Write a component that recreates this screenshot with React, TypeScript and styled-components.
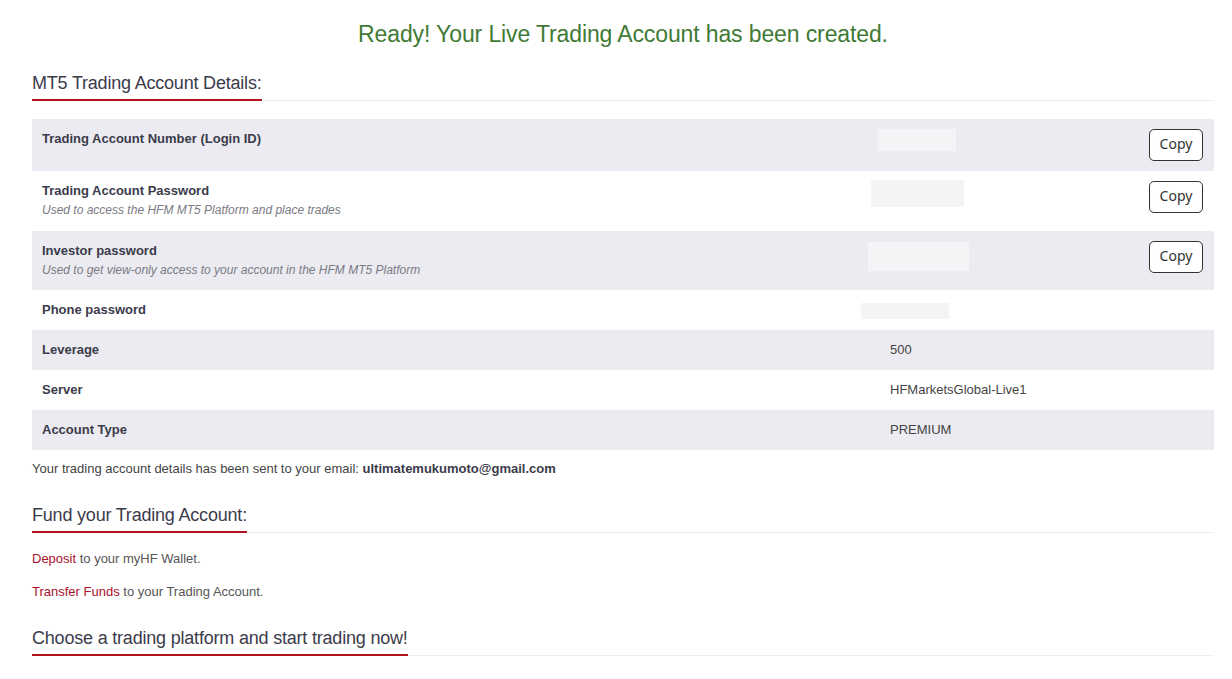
import React from 'react';
import styled, { createGlobalStyle } from 'styled-components';

const GlobalStyle = createGlobalStyle`
  body {
    margin: 0;
    background: #fff;
    font-family: "Liberation Sans", Arial, sans-serif;
    color: #3b3b4b;
  }
`;

// style
const Page = styled.div`
  padding: 0 18px 20px 32px;
`;

const Title = styled.h1`
  margin: 20px 0 0;
  font-size: 23px;
  line-height: 28px;
  letter-spacing: -0.12px;
  font-weight: 400;
  text-align: center;
  color: #417a35;
`;

const SectionHeader = styled.div<{ $top: number }>`
  margin-top: ${(props) => props.$top}px;
  border-bottom: 1px solid #eeeef2;
`;

const SectionTitle = styled.h2`
  display: inline-block;
  margin: 0 0 -1px;
  padding: 1px 0 5px;
  font-size: 18px;
  line-height: 22px;
  letter-spacing: -0.2px;
  font-weight: 400;
  color: #3b3b4b;
  border-bottom: 2px solid #b3151f;
`;

const Table = styled.div`
  margin-top: 18px;
`;

const Row = styled.div<{ $shaded: boolean }>`
  display: grid;
  grid-template-columns: 848px 1fr auto;
  align-items: start;
  padding: 10px 11px 10px 10px;
  background-color: ${(props) => (props.$shaded ? '#ebebf1' : '#fff')};
`;

const Label = styled.div`
  font-size: 13px;
  line-height: 20px;
  font-weight: 700;
  color: #3b3b4b;
`;

const Hint = styled.div`
  font-size: 12px;
  line-height: 19.5px;
  font-style: italic;
  color: #7a7a84;
`;

const Value = styled.div`
  font-size: 13px;
  line-height: 20px;
  color: #444;
`;

const Masked = styled.div<{ $w: number; $h: number; $shift: number; $top: number }>`
  width: ${(props) => props.$w}px;
  height: ${(props) => props.$h}px;
  margin-left: ${(props) => -props.$shift}px;
  margin-top: ${(props) => props.$top}px;
  background-color: #f4f4f7;
`;

const CopyButton = styled.button`
  width: 54px;
  height: 32px;
  margin-left: 1px;
  padding: 0 0 3px;
  font-family: "Noto Sans", "Open Sans", sans-serif;
  font-size: 14px;
  color: #333;
  background-color: #fff;
  border: 1px solid #333;
  border-radius: 5px;
`;

const Note = styled.p`
  margin: 10px 0 0;
  font-size: 13px;
  line-height: 18px;
  color: #444;
  b {
    color: #3b3b4b;
  }
`;

const LinkLine = styled.p<{ $top: number }>`
  margin: ${(props) => props.$top}px 0 0;
  font-size: 13px;
  line-height: 18px;
  color: #555;
  a {
    color: #a8112a;
    text-decoration: none;
  }
`;

// data
interface IDetail {
  label: string;
  hint?: string;
  value?: string;
  mask?: { w: number; h: number; shift: number; top: number };
  copy?: boolean;
}

const details: IDetail[] = [
  { label: 'Trading Account Number (Login ID)', mask: { w: 78, h: 22, shift: 12, top: 0 }, copy: true },
  {
    label: 'Trading Account Password',
    hint: 'Used to access the HFM MT5 Platform and place trades',
    mask: { w: 93, h: 27, shift: 19, top: -1 },
    copy: true,
  },
  {
    label: 'Investor password',
    hint: 'Used to get view-only access to your account in the HFM MT5 Platform',
    mask: { w: 101, h: 29, shift: 22, top: 1 },
    copy: true,
  },
  { label: 'Phone password', mask: { w: 88, h: 16, shift: 29, top: 3 } },
  { label: 'Leverage', value: '500' },
  { label: 'Server', value: 'HFMarketsGlobal-Live1' },
  { label: 'Account Type', value: 'PREMIUM' },
];

function App() {
  return (
    <Page>
      <GlobalStyle />
      <Title>Ready! Your Live Trading Account has been created.</Title>

      <SectionHeader $top={23}>
        <SectionTitle>MT5 Trading Account Details:</SectionTitle>
      </SectionHeader>

      <Table>
        {details.map((d, i) => (
          <Row key={d.label} $shaded={i % 2 === 0}>
            <div>
              <Label>{d.label}</Label>
              {d.hint && <Hint>{d.hint}</Hint>}
            </div>
            {d.mask ? (
              <Masked $w={d.mask.w} $h={d.mask.h} $shift={d.mask.shift} $top={d.mask.top} />
            ) : (
              <Value>{d.value}</Value>
            )}
            {d.copy ? <CopyButton>Copy</CopyButton> : <span />}
          </Row>
        ))}
      </Table>

      <Note>
        Your trading account details has been sent to your email: <b>ultimatemukumoto@gmail.com</b>
      </Note>

      <SectionHeader $top={25}>
        <SectionTitle>Fund your Trading Account:</SectionTitle>
      </SectionHeader>
      <LinkLine $top={17}>
        <a href="#">Deposit</a> to your myHF Wallet.
      </LinkLine>
      <LinkLine $top={15}>
        <a href="#">Transfer Funds</a> to your Trading Account.
      </LinkLine>

      <SectionHeader $top={25}>
        <SectionTitle>Choose a trading platform and start trading now!</SectionTitle>
      </SectionHeader>
    </Page>
  );
}

export default App;
